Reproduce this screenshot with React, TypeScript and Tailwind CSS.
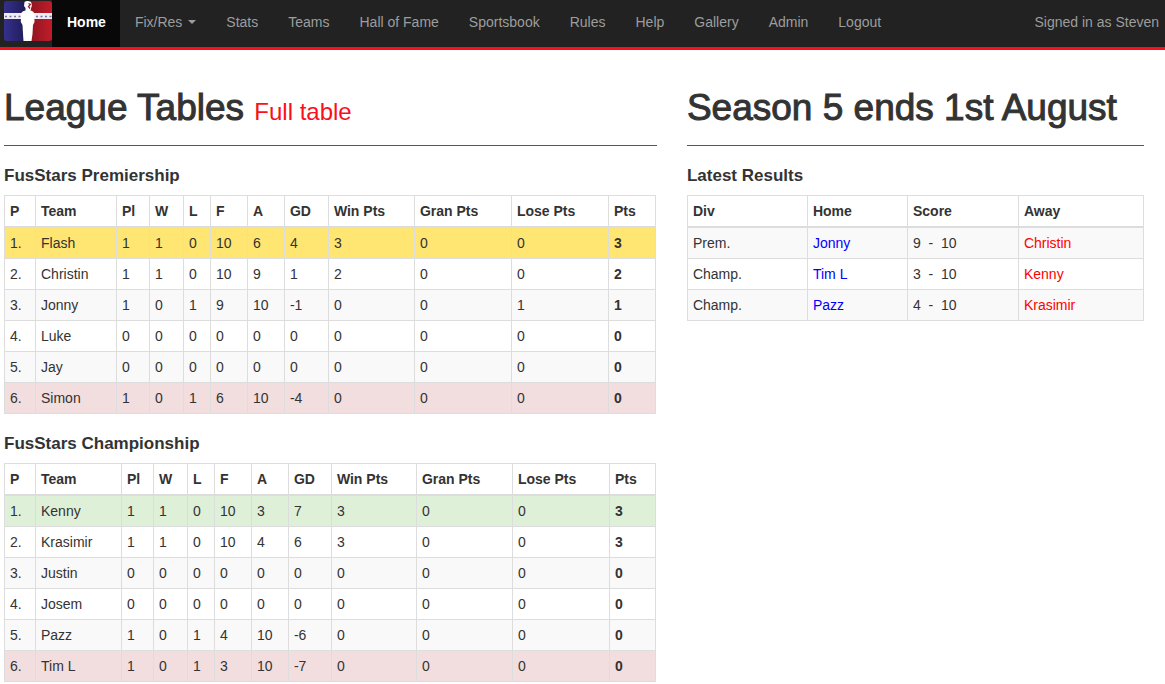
import React from 'react';

const navItems = ['Stats', 'Teams', 'Hall of Fame', 'Sportsbook', 'Rules', 'Help', 'Gallery', 'Admin', 'Logout'];

type Row = [string, number, number, number, number, number, number, number, number, number, number];

const headers = ['P', 'Team', 'Pl', 'W', 'L', 'F', 'A', 'GD', 'Win Pts', 'Gran Pts', 'Lose Pts', 'Pts'];

const premiership: Row[] = [
  ['Flash', 1, 1, 0, 10, 6, 4, 3, 0, 0, 3],
  ['Christin', 1, 1, 0, 10, 9, 1, 2, 0, 0, 2],
  ['Jonny', 1, 0, 1, 9, 10, -1, 0, 0, 1, 1],
  ['Luke', 0, 0, 0, 0, 0, 0, 0, 0, 0, 0],
  ['Jay', 0, 0, 0, 0, 0, 0, 0, 0, 0, 0],
  ['Simon', 1, 0, 1, 6, 10, -4, 0, 0, 0, 0],
];

const championship: Row[] = [
  ['Kenny', 1, 1, 0, 10, 3, 7, 3, 0, 0, 3],
  ['Krasimir', 1, 1, 0, 10, 4, 6, 3, 0, 0, 3],
  ['Justin', 0, 0, 0, 0, 0, 0, 0, 0, 0, 0],
  ['Josem', 0, 0, 0, 0, 0, 0, 0, 0, 0, 0],
  ['Pazz', 1, 0, 1, 4, 10, -6, 0, 0, 0, 0],
  ['Tim L', 1, 0, 1, 3, 10, -7, 0, 0, 0, 0],
];

const premiershipCols = [31, 81, 33, 34, 27, 37, 37, 44, 86, 97, 97, 47];
const championshipCols = [31, 86, 32, 34, 27, 37, 37, 43, 85, 96, 97, 46];
const resultCols = [120, 100, 111, 125];

const results = [
  { div: 'Prem.', home: 'Jonny', score: [9, 10], away: 'Christin' },
  { div: 'Champ.', home: 'Tim L', score: [3, 10], away: 'Kenny' },
  { div: 'Champ.', home: 'Pazz', score: [4, 10], away: 'Krasimir' },
];

const cell = 'border border-[#ddd] p-[5px] text-left';
const boldCell = 'border border-[#ddd] p-[5px] text-left font-bold';
const headCell = 'border border-b-2 border-[#ddd] p-[5px] text-left font-bold';
const pageTitle = 'text-[37px] leading-10 [-webkit-text-stroke:1px_#333]';
const sectionTitle = 'mb-[9px] text-[17px] leading-5 font-bold';
const rule = 'mt-[17px] mb-5 border-[#fb0f1a]';

function Columns({ widths }: { widths: number[] }) {
  const total = widths.reduce((sum, w) => sum + w, 0);
  return (
    <colgroup>
      {widths.map((w, i) => (
        <col key={i} style={{ width: `${(w / total) * 100}%` }} />
      ))}
    </colgroup>
  );
}

function Logo() {
  return (
    <svg viewBox="0 0 48 40" className="h-10 w-12" role="img" aria-label="FusStars">
      <defs>
        <linearGradient id="blue" x1="0" x2="1">
          <stop offset="0" stopColor="#35308a" />
          <stop offset="1" stopColor="#1d1a55" />
        </linearGradient>
        <linearGradient id="red" x1="0" x2="1">
          <stop offset="0" stopColor="#8a1420" />
          <stop offset="1" stopColor="#c21c2a" />
        </linearGradient>
        <clipPath id="frame">
          <rect width="48" height="40" rx="3" />
        </clipPath>
      </defs>
      <g clipPath="url(#frame)">
        <rect width="24" height="40" fill="url(#blue)" />
        <rect x="24" width="24" height="40" fill="url(#red)" />
        <rect y="12" width="48" height="6" fill="#efecf4" />
        <path d="M1 15.5H17M32 15.5H48" stroke="#7a6f9c" strokeWidth="1.5" strokeDasharray="2 2.5" />
        <path
          d="M20.5 1Q23-1 27 1L28 4L26.5 9.500Q30 10 30.300 13L30.500 21L29 24L28.500 33L27.500 40H19.500L19 33L18.500 24L16.800 21L17 13Q17.500 10 21.500 9.500L21.500 7L20 5Z"
          fill="#fff"
        />
        <path d="M24.500 2.500L26.500 3.500L24.500 5.500L26 7.500" stroke="#a51d2d" strokeWidth="1.3" fill="none" />
      </g>
    </svg>
  );
}

function NavBar() {
  return (
    <nav className="flex items-start border-b-3 border-[#fb0f1a] bg-[#222] pl-1 text-[#9d9d9d]">
      <a href="#" className="pt-px">
        <Logo />
      </a>
      <ul className="flex flex-1 leading-5">
        <li>
          <a href="#" className="block bg-[#080808] pt-3 pr-3.5 pb-[15px] pl-[15px] font-bold text-white">Home</a>
        </li>
        <li>
          <button type="button" className="flex items-center px-[15px] pt-3 pb-[15px]">
            Fix/Res
            <svg viewBox="0 0 8 4" className="ml-1.5 h-1 w-2" fill="currentColor" aria-hidden="true">
              <path d="M0 0H8L4 4Z" />
            </svg>
          </button>
        </li>
        {navItems.map((item) => (
          <li key={item}>
            <a href="#" className="block px-[15px] pt-3 pb-[15px]">{item}</a>
          </li>
        ))}
      </ul>
      <p className="pt-3 pr-1.5 leading-5">Signed in as Steven</p>
    </nav>
  );
}

function LeagueTable({ title, rows, widths, topRow }: { title: string; rows: Row[]; widths: number[]; topRow: string }) {
  return (
    <section className="mb-5 pr-px last:mb-0">
      <h4 className={sectionTitle}>{title}</h4>
      <table className="w-full table-fixed border-collapse leading-5">
        <Columns widths={widths} />
        <thead>
          <tr>
            {headers.map((h) => (
              <th key={h} scope="col" className={headCell}>{h}</th>
            ))}
          </tr>
        </thead>
        <tbody>
          {rows.map((row, i) => {
            const tone = i === 0 ? topRow : i === rows.length - 1 ? 'bg-[#f2dede]' : i % 2 === 0 ? 'bg-[#f9f9f9]' : '';
            return (
              <tr key={row[0]} className={tone}>
                <td className={cell}>{i + 1}.</td>
                {row.map((value, j) => (
                  <td key={j} className={j === row.length - 1 ? boldCell : cell}>{value}</td>
                ))}
              </tr>
            );
          })}
        </tbody>
      </table>
    </section>
  );
}

export default function App() {
  return (
    <div className="min-h-screen bg-white font-['Liberation_Sans',Arial,sans-serif] text-sm text-[#333]">
      <NavBar />
      <main className="grid grid-cols-[10fr_7fr] gap-[30px] pt-[38px] pr-[21px] pl-1">
        <div>
          <h1 className={pageTitle}>
            League Tables{' '}
            <a href="#" className="text-2xl text-[#fb0f1a] [-webkit-text-stroke:0]">Full table</a>
          </h1>
          <hr className={rule} />
          <LeagueTable title="FusStars Premiership" rows={premiership} widths={premiershipCols} topRow="bg-[#ffe571]" />
          <LeagueTable title="FusStars Championship" rows={championship} widths={championshipCols} topRow="bg-[#dff0d8]" />
        </div>
        <div>
          <h1 className={pageTitle}>Season 5 ends 1st August</h1>
          <hr className={rule} />
          <h4 className={sectionTitle}>Latest Results</h4>
          <table className="w-full table-fixed border-collapse leading-5">
            <Columns widths={resultCols} />
            <thead>
              <tr>
                <th scope="col" className={headCell}>Div</th>
                <th scope="col" className={headCell}>Home</th>
                <th scope="col" className={headCell}>Score</th>
                <th scope="col" className={headCell}>Away</th>
              </tr>
            </thead>
            <tbody>
              {results.map((r) => (
                <tr key={r.home} className="odd:bg-[#f9f9f9]">
                  <td className={cell}>{r.div}</td>
                  <td className={cell}><a href="#" className="text-[#00f]">{r.home}</a></td>
                  <td className={cell}>{r.score[0]}&nbsp; -&nbsp; {r.score[1]}</td>
                  <td className={cell}><a href="#" className="text-[#f00]">{r.away}</a></td>
                </tr>
              ))}
            </tbody>
          </table>
        </div>
      </main>
    </div>
  );
}
